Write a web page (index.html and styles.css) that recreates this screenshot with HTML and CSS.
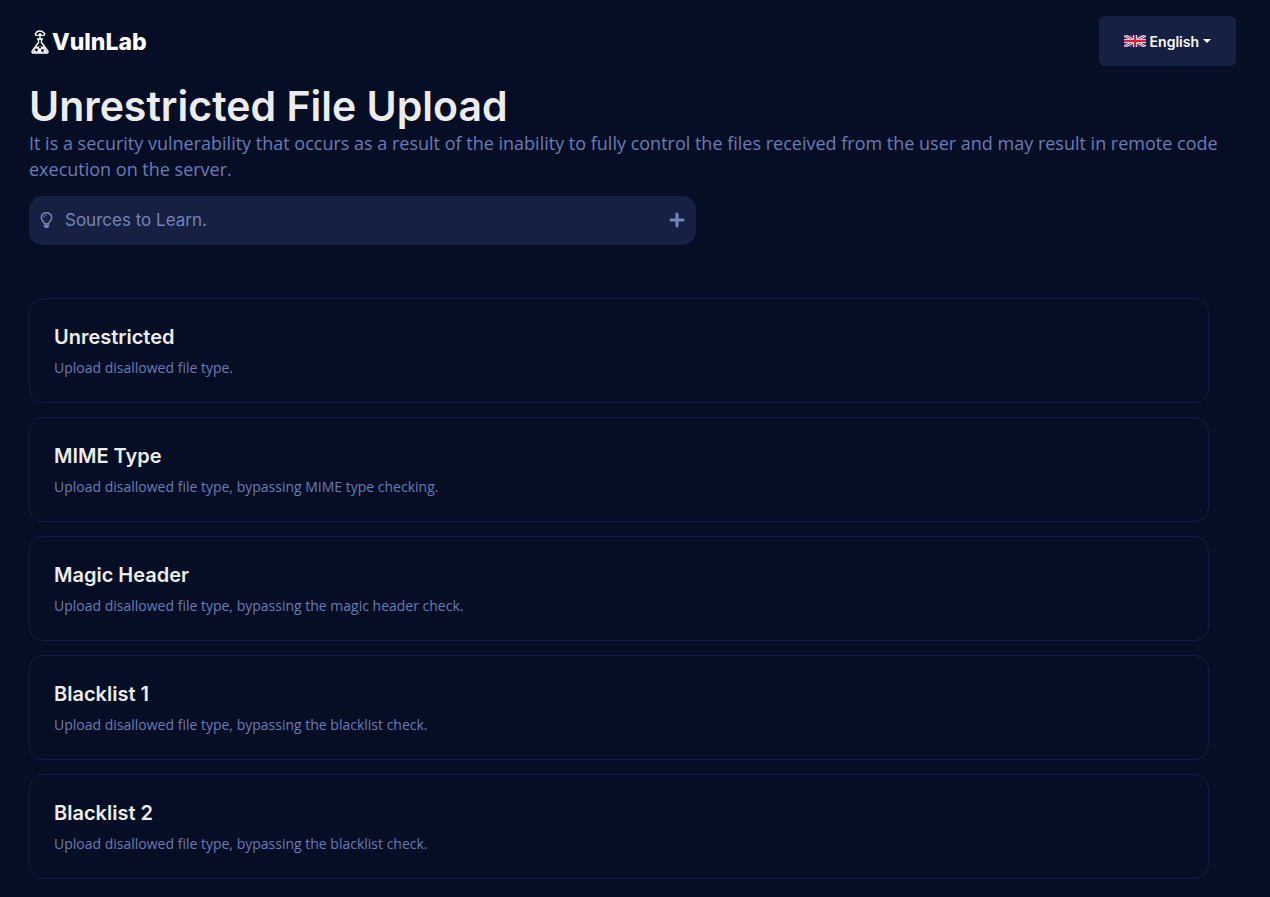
FILE: index.html
```html
<!DOCTYPE html>
<html lang="en">
<head>
<meta charset="utf-8">
<meta name="viewport" content="width=device-width, initial-scale=1">
<title>VulnLab - Unrestricted File Upload</title>
<link rel="stylesheet" href="styles.css">
</head>
<body>
<header class="navbar">
  <a class="brand" href="#">
    <svg class="brand-icon" viewBox="0 0 18 24" aria-hidden="true">
      <g fill="none" stroke="#fff" stroke-width="1.4" stroke-linecap="round" stroke-linejoin="round">
        <path d="M6 5.500C3.800 5.500 3.800 3 5.500 2.800 6 .5 11.500.3 12.500 2.800c1.700.2 1.700 2.700-.5 2.700M9 4v5M7.500 5.200L9 3.800l1.500 1.400"/>
        <path d="M6.500 9h5M7.500 9v3.500L1.200 21c-.6 1 0 2 1.200 2h13.200c1.200 0 1.800-1 1.200-2L10.500 12.500V9"/>
      </g>
      <path fill="#fff" d="M5.500 16.500l7 0 4 6h-15z"/>
      <g fill="#060e26"><circle cx="5.500" cy="20" r="1.400"/><circle cx="11.500" cy="20.500" r="1.400"/><circle cx="9" cy="17.500" r="1.100"/></g>
    </svg>
    <span>VulnLab</span>
  </a>
  <button class="language" type="button">
    <svg class="flag" viewBox="0 0 22 12" aria-hidden="true">
      <path fill="#25408f" d="M0 0h22v12H0z"/>
      <path stroke="#fff" stroke-width="2.600" d="M0 0l22 12M22 0L0 12"/>
      <path stroke="#d8203c" stroke-width="1" d="M0 0l22 12M22 0L0 12"/>
      <path stroke="#fff" stroke-width="4" d="M11 0v12M0 6h22"/>
      <path stroke="#d8203c" stroke-width="2.400" d="M11 0v12M0 6h22"/>
    </svg>
    <span>English</span>
    <span class="caret"></span>
  </button>
</header>
<main class="content">
  <h1 class="title">Unrestricted File Upload</h1>
  <p class="intro">It is a security vulnerability that occurs as a result of the inability to fully control the files received from the user and may result in remote code execution on the server.</p>
  <button class="sources" type="button" aria-expanded="false">
    <svg class="bulb" viewBox="0 0 12 16" aria-hidden="true">
      <path fill="none" stroke="currentColor" stroke-width="1.500" d="M4 11.800C3.800 9.300.8 8.700.8 5.500a5.200 4.800 0 0 1 10.400 0c0 3.200-3 3.800-3.200 6.300z"/>
      <path fill="none" stroke="currentColor" d="M3.300 5.700C3.300 4 4.300 3 6 3"/>
      <path fill="currentColor" d="M3.300 12.500h5.400V14L7.500 16h-3L3.300 14z"/>
    </svg>
    <span>Sources to Learn.</span>
    <svg class="plus" viewBox="0 0 16 16" aria-hidden="true"><path stroke="currentColor" stroke-width="3" stroke-linecap="round" d="M8 2v12M2 8h12"/></svg>
  </button>
  <div class="cards">
    <a class="card" href="#"><h2>Unrestricted</h2><p>Upload disallowed file type.</p></a>
    <a class="card" href="#"><h2>MIME Type</h2><p>Upload disallowed file type, bypassing MIME type checking.</p></a>
    <a class="card" href="#"><h2>Magic Header</h2><p>Upload disallowed file type, bypassing the magic header check.</p></a>
    <a class="card" href="#"><h2>Blacklist 1</h2><p>Upload disallowed file type, bypassing the blacklist check.</p></a>
    <a class="card" href="#"><h2>Blacklist 2</h2><p>Upload disallowed file type, bypassing the blacklist check.</p></a>
  </div>
</main>
</body>
</html>
```
FILE: styles.css
```css
* { box-sizing: border-box; }
body {
  margin: 0;
  background: #060e26;
  color: #ececec;
  font-family: Inter, "Liberation Sans", sans-serif;
}
h1, h2, p { margin: 0; }
a { color: inherit; text-decoration: none; }
button { border: 0; font-family: inherit; cursor: pointer; }
.navbar {
  display: flex;
  align-items: center;
  justify-content: space-between;
  padding: 16px 34px 16px 31px;
}
.brand {
  display: flex;
  align-items: center;
  gap: 3px;
  padding-top: 2px;
  color: #fff;
  font-size: 23px;
  line-height: 24px;
  font-weight: 800;
}
.brand-icon { width: 18px; height: 24px; }
.language {
  display: flex;
  align-items: center;
  gap: 4px;
  height: 50px;
  padding: 0 25px;
  border-radius: 6px;
  background: #162043;
  color: #fff;
  font-size: 14px;
  font-weight: 600;
}
.flag { width: 22px; height: 12px; }
.caret {
  border-top: 4px solid #fff;
  border-left: 4px solid transparent;
  border-right: 4px solid transparent;
}
.content { padding: 0 29px 18px; }
.title {
  font-size: 41px;
  line-height: 48px;
  font-weight: 600;
}
.intro {
  color: #6b7bb3;
  font-family: "Open Sans", sans-serif;
  font-size: 18px;
  line-height: 26px;
}
.sources {
  display: flex;
  align-items: center;
  width: 100%;
  max-width: 667px;
  height: 49px;
  margin-top: 14px;
  padding: 0 11px 2px;
  border-radius: 14px;
  background: #162043;
  color: #7483b8;
  font-size: 17px;
}
.bulb { width: 13px; height: 16px; margin-right: 12px; }
.plus { width: 16px; height: 16px; margin-left: auto; }
.cards {
  display: grid;
  gap: 14px;
  margin: 53px 32px 0 0;
}
.card {
  padding: 24px;
  border: 1px solid #131c3e;
  border-radius: 14px;
}
.card h2 { font-size: 20px; line-height: 28px; font-weight: 600; }
.card p {
  padding-top: 7px;
  color: #6b7bb3;
  font-family: "Open Sans", sans-serif;
  font-size: 14px;
  line-height: 20px;
}
```
